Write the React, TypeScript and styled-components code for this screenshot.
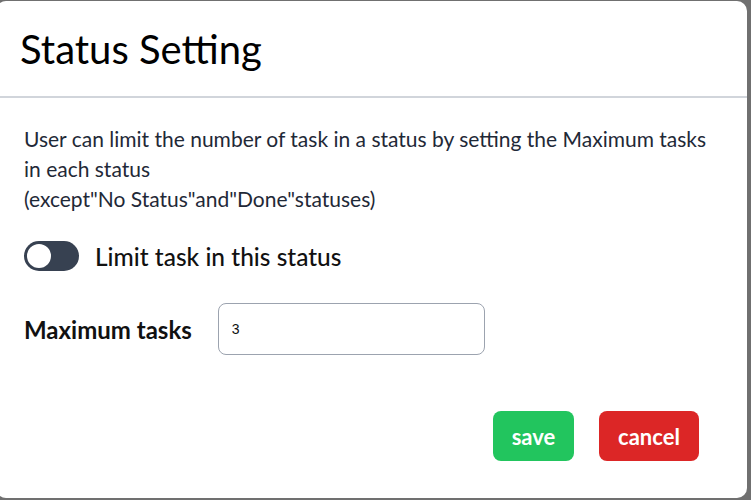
import { useState } from "react"
import styled, { createGlobalStyle } from "styled-components"

const GlobalStyle = createGlobalStyle`
  html, body {
    margin: 0;
    padding: 0;
    background: #707070;
    overflow: hidden;
  }
  body {
    font-family: Lato, "Noto Sans", sans-serif;
  }
`

const Backdrop = styled.div`
  padding-top: 1px;
  height: 499px;
`

const Modal = styled.div`
  margin-left: -4px;
  width: 751px;
  height: 497px;
  background: #ffffff;
  border-radius: 10px;
  display: flex;
  flex-direction: column;
`

const Header = styled.div`
  height: 95px;
  display: flex;
  align-items: center;
  padding: 0 24px;
  border-bottom: 2px solid #d1d5db;
`

const Title = styled.h2`
  margin: 0;
  font-size: 40px;
  font-weight: 400;
  color: #000;
`

const Body = styled.div`
  padding: 26px 28px 0;
  display: flex;
  flex-direction: column;
`

const Description = styled.p`
  margin: 0;
  font-size: 21px;
  line-height: 30px;
  color: #1f2937;
`

const ToggleRow = styled.label`
  margin-top: 27px;
  display: flex;
  align-items: center;
  gap: 16px;
  cursor: pointer;
`

const Track = styled.span<{ $on: boolean }>`
  width: 55px;
  height: 30px;
  border-radius: 15px;
  background: ${(p) => (p.$on ? "#22c55e" : "#374151")};
  display: flex;
  align-items: center;
  padding: 0 3px;
  box-sizing: border-box;
  justify-content: ${(p) => (p.$on ? "flex-end" : "flex-start")};
`

const Knob = styled.span`
  width: 24px;
  height: 24px;
  border-radius: 50%;
  background: #ffffff;
`

const ToggleLabel = styled.span`
  font-size: 24.5px;
  font-weight: 500;
  color: #111;
`

const FieldRow = styled.div`
  margin-top: 32px;
  display: flex;
  align-items: center;
  gap: 26px;
`

const FieldLabel = styled.span`
  font-size: 24px;
  font-weight: 700;
  color: #111;
`

const Input = styled.input`
  width: 267px;
  height: 52px;
  box-sizing: border-box;
  border: 1px solid #9ca3af;
  border-radius: 8px;
  padding: 0 13px;
  font-family: "Liberation Sans", Arial, sans-serif;
  font-size: 14px;
  color: #111;
  outline: none;
`

const Footer = styled.div`
  margin-top: 56px;
  padding-right: 48px;
  display: flex;
  justify-content: flex-end;
  gap: 25px;
`

const Button = styled.button<{ $variant: "save" | "cancel" }>`
  width: ${(p) => (p.$variant === "save" ? "81px" : "100px")};
  height: 50px;
  padding: 0;
  border: none;
  border-radius: 8px;
  background: ${(p) => (p.$variant === "save" ? "#22c55e" : "#dc2626")};
  color: #ffffff;
  font-family: Lato, "Noto Sans", sans-serif;
  font-size: 22px;
  font-weight: 700;
  cursor: pointer;
`

export default function App() {
  const [limited, setLimited] = useState(false)
  const [max, setMax] = useState("3")

  return (
    <>
      <GlobalStyle />
      <Backdrop>
        <Modal>
          <Header>
            <Title>Status Setting</Title>
          </Header>
          <Body>
            <Description>
              User can limit the number of task in a status by setting the Maximum tasks in each status
              <br />
              (except"No Status"and"Done"statuses)
            </Description>
            <ToggleRow onClick={() => setLimited(!limited)}>
              <Track $on={limited}>
                <Knob />
              </Track>
              <ToggleLabel>Limit task in this status</ToggleLabel>
            </ToggleRow>
            <FieldRow>
              <FieldLabel>Maximum tasks</FieldLabel>
              <Input value={max} onChange={(e) => setMax(e.target.value)} />
            </FieldRow>
          </Body>
          <Footer>
            <Button $variant="save">save</Button>
            <Button $variant="cancel">cancel</Button>
          </Footer>
        </Modal>
      </Backdrop>
    </>
  )
}
